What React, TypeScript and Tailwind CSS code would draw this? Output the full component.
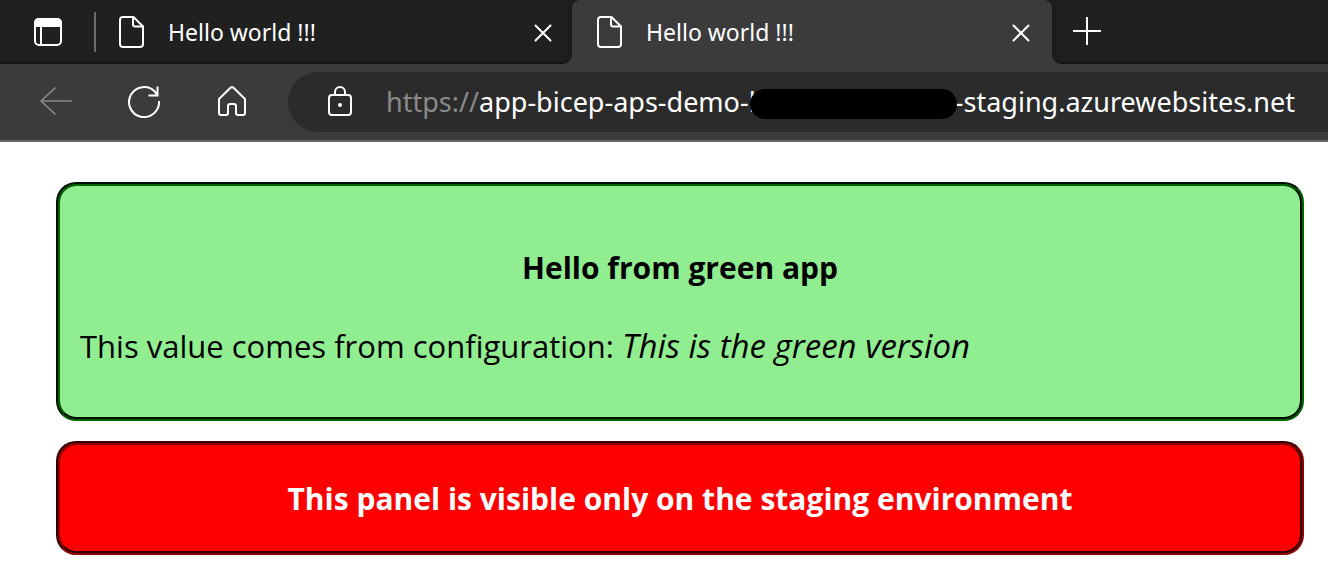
import type { ReactNode } from "react";

function Icon({ size, children }: { size: number; children: ReactNode }) {
  return (
    <svg
      width={size}
      height={size}
      viewBox={`0 0 ${size} ${size}`}
      fill="none"
      stroke="currentColor"
      strokeWidth="2"
      strokeLinecap="round"
      strokeLinejoin="round"
      className="shrink-0"
      aria-hidden="true"
    >
      {children}
    </svg>
  );
}

function Tab({ title, active = false }: { title: string; active?: boolean }) {
  return (
    <div
      className={
        active
          ? "relative flex h-16 w-[480px] items-center rounded-t-lg bg-[#3b3b3b] pr-[18px] pl-5 shadow-[0_0_10px_rgba(0,0,0,0.55)]"
          : "flex h-16 w-[476px] items-center pr-4 pl-[18px]"
      }
    >
      {active && (
        <>
          <span className="absolute bottom-0 -left-2 size-2 bg-[radial-gradient(circle_at_0_0,transparent_7px,#3b3b3b_8px)]" />
          <span className="absolute -right-2 bottom-0 size-2 bg-[radial-gradient(circle_at_100%_0,transparent_7px,#3b3b3b_8px)]" />
        </>
      )}
      <button type="button" role="tab" aria-selected={active} className="flex min-w-0 flex-1 items-center gap-[22px] text-left">
        <Icon size={32}>
          <path d="M9 1h10.500l9.500 9.500v17.500a3 3 0 0 1-3 3H9a3 3 0 0 1-3-3V4a3 3 0 0 1 3-3z" />
          <path d="M19 1v7.500a2 2 0 0 0 2 2h8" />
        </Icon>
        <span className="truncate text-[23px] leading-8">{title}</span>
      </button>
      <button type="button" aria-label="Close tab" className="pt-0.5">
        <Icon size={26}>
          <path d="M5.500 5.500l15 15M20.500 5.500l-15 15" />
        </Icon>
      </button>
    </div>
  );
}

const hiddenPart = "b" + "\u00a0".repeat(27);

export default function App() {
  return (
    <div className="min-h-screen bg-white">
      <header className="bg-[#3b3b3b] font-['Noto_Sans','Open_Sans',sans-serif] text-white">
        <div className="flex items-center overflow-hidden bg-[#202020] shadow-[inset_0_-4px_4px_-3px_rgba(0,0,0,0.6)]">
          <button type="button" aria-label="Tab actions" className="flex w-[94px] justify-center pl-0.5">
            <Icon size={30}>
              <rect x="2" y="2" width="26" height="26" rx="4" />
              <path d="M2 9V6a4 4 0 0 1 4-4h18a4 4 0 0 1 4 4v3z" fill="currentColor" strokeLinejoin="miter" />
              <path d="M8 9v19" />
            </Icon>
          </button>
          <span className="h-10 w-0.5 bg-[#6b6b6b]" />
          <Tab title="Hello world !!!" />
          <Tab title="Hello world !!!" active />
          <button type="button" aria-label="New tab" className="ml-5">
            <Icon size={30}>
              <path d="M15 0v28M1 14h28" strokeLinecap="butt" />
            </Icon>
          </button>
        </div>
        <nav className="flex items-center border-b-2 border-[#6b6868] py-2 pl-10">
          <button type="button" aria-label="Back" className="text-[#8a8a8a]">
            <Icon size={32}>
              <path d="M31 15H1M15 2L1 15l14 13" strokeWidth="1.700" />
            </Icon>
          </button>
          <button type="button" aria-label="Refresh" className="ml-14">
            <Icon size={32}>
              <path d="M31 15A15 15 0 1 1 27 5.800L29 9M29.500 0.500v9H20.500" strokeLinecap="butt" strokeLinejoin="miter" />
            </Icon>
          </button>
          <button type="button" aria-label="Home" className="ml-14">
            <Icon size={32}>
              <path d="M3 13L14.500 1.800a2.200 2.200 0 0 1 3 0L29 13v14a2 2 0 0 1-2 2h-5a2 2 0 0 1-2-2V20a2 2 0 0 0-2-2h-4a2 2 0 0 0-2 2v7a2 2 0 0 1-2 2H5a2 2 0 0 1-2-2z" />
            </Icon>
          </button>
          <div className="ml-10 flex h-[60px] min-w-0 flex-1 items-center rounded-l-full bg-[#2b2b2b] pl-9">
            <Icon size={32}>
              <rect x="5" y="9" width="22" height="20" rx="3" />
              <path d="M11 9V6a5 5 0 0 1 10 0v3" />
              <circle cx="16" cy="19" r="2" fill="currentColor" stroke="none" />
            </Icon>
            <label htmlFor="address" className="ml-[30px] text-[27px] leading-9 text-[#8a8a8a]">
              https://
            </label>
            <div className="relative min-w-0 flex-1">
              <input
                id="address"
                type="text"
                defaultValue={`app-bicep-aps-demo-${hiddenPart}-staging.azurewebsites.net`}
                className="block w-full bg-transparent text-[27px] leading-9 outline-none"
              />
              <span className="absolute top-[5px] left-[271px] h-[30px] w-[207px] rounded-full bg-black" />
            </div>
          </div>
        </nav>
      </header>
      <main className="flex flex-col gap-5 pt-10 pr-6 pb-7 pl-14 font-['Trebuchet_MS','Open_Sans',sans-serif] leading-9">
        <section className="rounded-[20px] border-4 border-[#006400] bg-[#90ee90] px-5 pt-16 pb-[53px] text-black [border-style:groove]">
          <h1 className="text-center text-[30px] leading-9 font-bold">Hello from green app</h1>
          <p className="mt-[42px] text-[31px] leading-9">
            This value comes from configuration: <em className="text-[33px] leading-8">This is the green version</em>
          </p>
        </section>
        <section className="rounded-[20px] border-4 border-[#8b0000] bg-[#ff0000] px-5 pt-9 pb-[34px] text-center text-white [border-style:groove]">
          <h2 className="text-[30px] leading-9 font-bold">This panel is visible only on the staging environment</h2>
        </section>
      </main>
    </div>
  );
}
